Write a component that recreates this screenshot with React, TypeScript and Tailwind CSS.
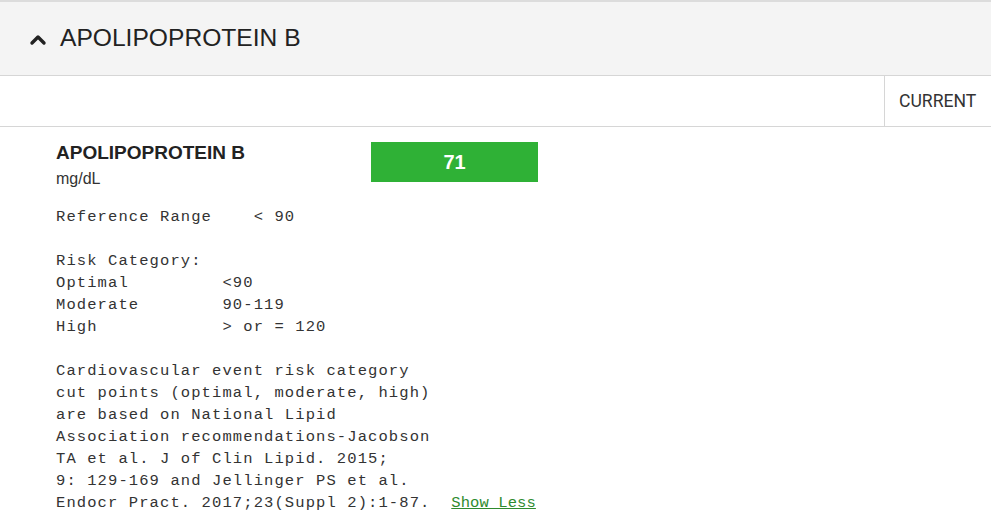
import { ChevronUp } from 'lucide-react';

const notes = `Reference Range    < 90

Risk Category:
Optimal         <90
Moderate        90-119
High            > or = 120

Cardiovascular event risk category
cut points (optimal, moderate, high)
are based on National Lipid
Association recommendations-Jacobson
TA et al. J of Clin Lipid. 2015;
9: 129-169 and Jellinger PS et al.
Endocr Pract. 2017;23(Suppl 2):1-87.  `;

const App = () => {
  return (
    <div className="min-h-[527px] bg-white text-[#222] font-['Liberation_Sans',Arial,sans-serif]">
      <div className="border-t-2 border-[#dcdcdc] bg-[#f4f4f4] border-b border-b-[#d6d6d6] h-[76px] flex items-center pl-[26px]">
        <ChevronUp className="w-[24px] h-[24px] text-[#222] mt-[2px]" strokeWidth={3.4} />
        <h1 className="ml-[10px] text-[24.6px] leading-none">APOLIPOPROTEIN B</h1>
      </div>

      <div className="flex justify-end h-[51px] border-b border-[#d6d6d6]">
        <div className="w-[107px] border-l border-[#d6d6d6] flex items-center pl-[14px] text-[17.6px] text-[#333] font-['Roboto',sans-serif]">
          CURRENT
        </div>
      </div>

      <div className="pl-[56px] pt-[15px]">
        <div className="flex">
          <div className="w-[315px]">
            <div className="text-[19px] font-bold leading-[22px]">APOLIPOPROTEIN B</div>
            <div className="text-[16px] leading-[20px] mt-[5px] text-[#333]">mg/dL</div>
          </div>
          <div className="w-[167px] h-[40px] bg-[#2fb136] text-white text-[20px] font-bold flex items-center justify-center">
            71
          </div>
        </div>
        <pre className="mt-[17px] font-['Liberation_Mono','Courier_New',monospace] text-[15.5px] leading-[22px] tracking-[1.1px] text-[#333]">
          {notes}
          <a href="#" className="text-[#2e8b2e] underline tracking-[0.1px]">Show Less</a>
        </pre>
      </div>
    </div>
  );
};

export default App;
